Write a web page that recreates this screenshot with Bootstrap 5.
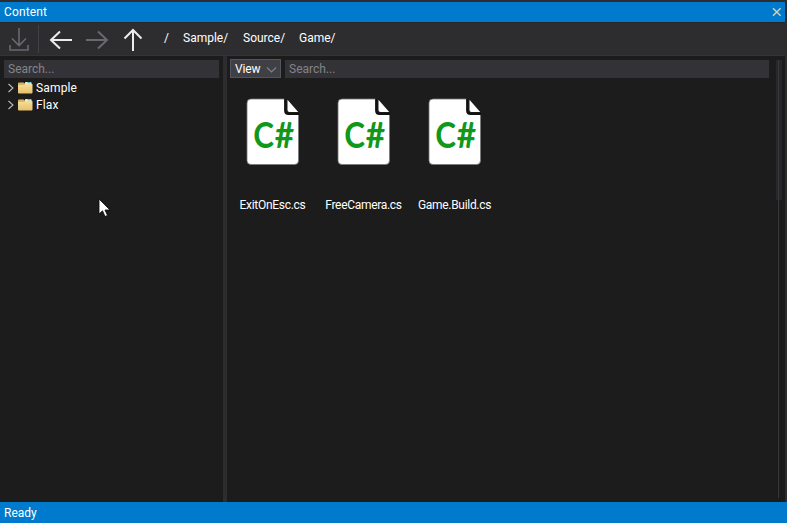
<!DOCTYPE html>
<html lang="en">
<head>
<meta charset="utf-8">
<meta name="viewport" content="width=device-width, initial-scale=1">
<title>Content</title>
<link href="https://cdn.jsdelivr.net/npm/bootstrap@5.3.0/dist/css/bootstrap.min.css" rel="stylesheet">
<style>
body{background:#1c1c1c;color:#fff;font:12px/16px Roboto,"Liberation Sans",sans-serif;letter-spacing:.15px;height:523px;cursor:default}
svg{display:block;flex:none}
.window{border-top:2px solid #2d2d30;border-right:2px solid #2d2d30}
.titlebar{height:20px;background:#007acc;padding:0 2px 0 4px}
.toolbar{height:34px;background:#2d2d30;border-top:1px solid #252527;border-bottom:1px solid #343437}
.crumb{margin-bottom:2px;letter-spacing:0}
.c0{width:19px}
.c1{width:60px}
.c2{width:56px}
.tree{width:223px;padding:4px 4px 0}
.split{width:4px;background:#2d2d30}
.search{height:18px;background:#333337;color:#838387;padding:1px 4px;line-height:16px;letter-spacing:0}
.tree-row{height:17px;padding-left:3px}
.tree-row .folder{margin-left:2px;margin-right:3px}
.tree-list{padding-top:1px}
.tools{padding:3px 0 0 3px;gap:4px}
.tools .search{margin-top:1px}
.view-btn{width:51px;height:19px;background:#3f3f46;border:1px solid #54545c;padding:2px 3px 0 4px;border-radius:0;color:#fff;font-size:12px;line-height:15px;letter-spacing:-.1px}
.assets{padding-top:14px}
.asset{width:91px;height:126px}
.asset svg{margin-top:6px}
.asset span{margin-top:31px;white-space:nowrap;letter-spacing:-.3px}
.scroll{width:6px;height:438px;margin:4px 3px 0 7px;background:linear-gradient(#37373b,#37373b) 2px 0/1px 100% no-repeat,linear-gradient(#28282a,#28282a) 0 0/6px 140px no-repeat}
.status{height:21px;background:#007acc;padding:3px 4px 0;letter-spacing:0}
.pointer{left:98px;top:198px}
.glyph{font-family:Lato,"Open Sans",sans-serif;font-weight:700;letter-spacing:0}
</style>
<script src="https://cdn.jsdelivr.net/npm/bootstrap@5.3.0/dist/js/bootstrap.bundle.min.js"></script>
</head>
<body class="d-flex flex-column overflow-hidden position-relative">
<svg width="0" height="0" class="position-absolute">
  <defs>
    <linearGradient id="fold" x1="0" y1="0" x2="0" y2="1"><stop offset="0" stop-color="#f7dfa0"/><stop offset="1" stop-color="#e5c069"/></linearGradient>
    <symbol id="folder" viewBox="0 0 16 14"><path d="M1 2.5Q1 1.500 2 1.500h4.500L8 2.600V12H1z" fill="#d9b562"/><path d="M8 2q0-.9 1-.9h4.500q1 0 1 1V5H8z" fill="#f4f1dc"/><path d="M10.500 1.100h3v1.200h-3z" fill="#20b9d0"/><path d="M1 4h6l2-1.200h5.500q1 0 1 1V11.500q0 1-1 1H2q-1 0-1-1z" fill="url(#fold)"/></symbol>
    <symbol id="csfile" viewBox="0 0 54 68">
      <path d="M5 1H39.5V12.5Q39.5 16 43 16H52.5V62.500Q52.500 66.500 48.500 66.500H5Q1 66.500 1 62.500V5Q1 1 5 1z" fill="#fff" stroke="#777" stroke-width=".8"/>
      <path d="M39.200 .5V12.500Q39.200 15.900 42.600 15.900H53" fill="none" stroke="#111" stroke-width="2.200"/>
      <path d="M41.500 1.800L52.200 14H43.500Q41.500 14 41.500 12z" fill="#fff"/>
      <text class="glyph" transform="translate(7.200 49.500) scale(.87 1)" font-size="36" fill="#10981b">C</text>
      <text class="glyph" transform="translate(28.800 49.500) scale(.93 1)" font-size="36" fill="#10981b">#</text>
    </symbol>
    <symbol id="chev" viewBox="0 0 8 10"><path d="M1.500 1L6 5L1.500 9" fill="none" stroke="#bcbcbe" stroke-width="1.100"/></symbol>
  </defs>
</svg>
<main class="window flex-grow-1 d-flex flex-column">
  <header class="titlebar d-flex align-items-center justify-content-between">
    <span>Content</span>
    <svg width="12" height="12" viewBox="0 0 12 12"><path d="M2 2.200l7.600 7.600m0-7.600l-7.600 7.600" stroke="#d8d2b8" stroke-width="1.400"/></svg>
  </header>
  <nav class="toolbar d-flex align-items-center">
    <svg width="164" height="32" viewBox="0 0 164 32" fill="none" stroke-width="2">
      <g stroke="#69696e" stroke-width="1.600"><path d="M19 5V22M12 15.500l7 7 7-7M10 22v5h18v-5"/></g>
      <path d="M38.500 2v28" stroke="#424246" stroke-width="1"/>
      <path d="M72 17H51M60 8.500L51 17l9 8.500" stroke="#ececec"/>
      <path d="M86 17h21M98 8.500l9 8.500-9 8.500" stroke="#69696e"/>
      <path d="M133 28V7M124.500 15.500L133 7l8.500 8.500" stroke="#ececec"/>
    </svg>
    <span class="crumb c0">/</span><span class="crumb c1">Sample/</span><span class="crumb c2">Source/</span><span class="crumb">Game/</span>
  </nav>
  <div class="d-flex flex-grow-1">
    <aside class="tree">
      <div class="search">Search...</div>
      <div class="tree-list">
        <div class="tree-row d-flex align-items-center"><svg width="8" height="10"><use href="#chev"/></svg><svg class="folder" width="16" height="14"><use href="#folder"/></svg><span>Sample</span></div>
        <div class="tree-row d-flex align-items-center"><svg width="8" height="10"><use href="#chev"/></svg><svg class="folder" width="16" height="14"><use href="#folder"/></svg><span>Flax</span></div>
      </div>
    </aside>
    <div class="split"></div>
    <section class="flex-grow-1">
      <div class="tools d-flex">
        <button class="btn view-btn d-flex align-items-center justify-content-between">View<svg width="12" height="8" viewBox="0 0 12 8"><path d="M2 1.500l4.500 4.500L11 1.500" fill="none" stroke="#808087" stroke-width="1.200"/></svg></button>
        <div class="search flex-grow-1">Search...</div>
      </div>
      <div class="assets d-flex">
        <div class="asset d-flex flex-column align-items-center"><svg width="54" height="68"><use href="#csfile"/></svg><span>ExitOnEsc.cs</span></div>
        <div class="asset d-flex flex-column align-items-center"><svg width="54" height="68"><use href="#csfile"/></svg><span>FreeCamera.cs</span></div>
        <div class="asset d-flex flex-column align-items-center"><svg width="54" height="68"><use href="#csfile"/></svg><span>Game.Build.cs</span></div>
      </div>
    </section>
    <div class="scroll"></div>
  </div>
</main>
<footer class="status">Ready</footer>
<svg class="pointer position-absolute" width="13" height="20" viewBox="0 0 13 20"><path d="M1 1V16L4.500 12.800L7 18.500L9.500 17.400L7 12H12z" fill="#fff" stroke="#080810" stroke-width=".8"/></svg>
</body>
</html>
